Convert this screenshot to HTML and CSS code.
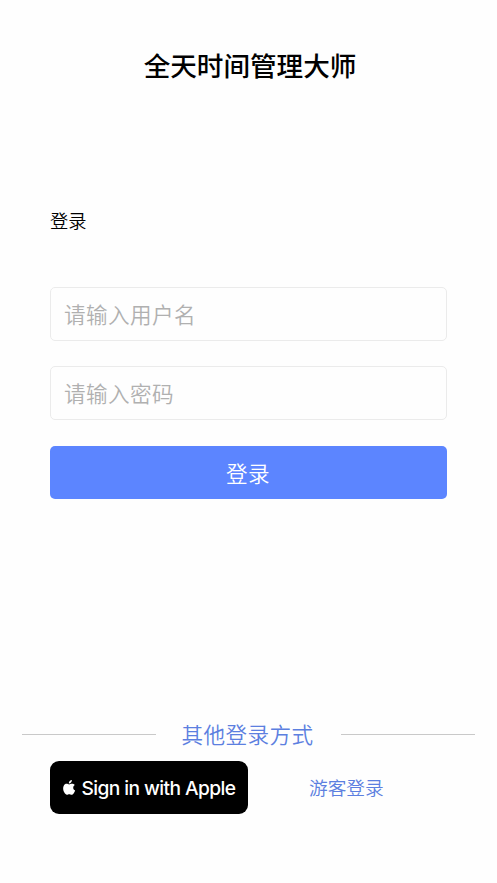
FILE: index.html
```html
<!DOCTYPE html>
<html lang="zh-CN">
<head>
<meta charset="utf-8">
<title>全天时间管理大师</title>
<link rel="stylesheet" href="styles.css">
</head>
<body>
<main class="page">
  <h1 class="title">全天时间管理大师</h1>
  <form class="form">
    <h2 class="heading">登录</h2>
    <input class="field" type="text" placeholder="请输入用户名">
    <input class="field field-password" type="password" placeholder="请输入密码">
    <button class="submit" type="button">登录</button>
  </form>
  <section class="other">
    <div class="divider"><span class="divider-text">其他登录方式</span></div>
    <div class="options">
      <button class="apple" type="button">
        <svg class="apple-icon" viewBox="0 0 24 29" fill="currentColor" aria-hidden="true">
          <path d="M17 0c.2 2-.6 3.800-1.700 5-1.200 1.300-2.600 2-4.100 1.900-.2-1.900.7-3.700 1.800-4.900C14.100.8 15.700.1 17 0z"/>
          <path d="M22.800 9.900c-2.100 1.300-3.100 2.900-3.100 5 0 2.400 1.400 4.400 3.700 5.300-.5 1.700-1.400 3.300-2.400 4.800-1.300 1.900-2.600 3.600-4.600 3.600-1.700 0-2.400-1.100-4.400-1.100s-2.900 1.100-4.500 1.100c-2 0-3.500-2-4.700-3.800C.2 21.100-.8 14.600 1.400 10.900c1.300-2.200 3.200-3.500 5.400-3.500 2 0 3.500 1.200 5 1.200 1.400 0 3-1.400 5.500-1.300 2.200.1 4.100.8 5.500 2.600z"/>
        </svg>
        <span>Sign in with Apple</span>
      </button>
      <a class="guest">游客登录</a>
    </div>
  </section>
</main>
</body>
</html>
```
FILE: styles.css
```css
* {
  box-sizing: border-box;
}

body {
  margin: 0;
  background: #fefefe;
  color: #000;
  font-family: "Noto Sans CJK SC", sans-serif;
  font-weight: 350;
}

.page {
  display: flex;
  flex-direction: column;
  height: 883px;
  padding-top: 45px;
  overflow: hidden;
}

.title {
  margin: 0 0 0 3px;
  font-size: 26.6px;
  font-weight: 500;
  line-height: 40px;
  text-align: center;
}

.form {
  display: flex;
  flex-direction: column;
  margin: 122px 50px 0;
}

.heading {
  margin: 0 0 53px;
  font-size: 18.3px;
  font-weight: 350;
  line-height: 27px;
}

.field {
  width: 100%;
  height: 54px;
  margin: 0 0 25px;
  padding: 0 13px 2px;
  border: 1px solid #ebebeb;
  border-radius: 5px;
  background: #fefefe;
  font: 350 21.6px "Noto Sans CJK SC", sans-serif;
  letter-spacing: 0.4px;
  outline: none;
}

.field-password {
  margin-bottom: 26px;
}

.field::placeholder {
  color: #b0b0b0;
  opacity: 1;
}

.submit {
  height: 53px;
  padding: 0 1px 0 0;
  border: 0;
  border-radius: 5px;
  background: #5c85ff;
  color: #fff;
  font: 350 21.6px "Noto Sans CJK SC", sans-serif;
  letter-spacing: 0.4px;
}

.other {
  margin: 218px 22px 0;
}

.divider {
  display: flex;
  align-items: center;
  gap: 27px;
  height: 34px;
}

.divider::before,
.divider::after {
  content: "";
  flex: 1;
  height: 1px;
  background: #c9c9c9;
}

.divider::before {
  margin-right: -1px;
}

.divider::after {
  margin-left: 1px;
}

.divider-text {
  color: #5c7fe0;
  font-size: 21.6px;
  letter-spacing: 0.4px;
  line-height: 34px;
}

.options {
  display: flex;
  align-items: center;
  margin: 10px 0 0 28px;
}

.apple {
  display: flex;
  align-items: center;
  gap: 6px;
  width: 198px;
  height: 53px;
  padding: 0 0 0 13px;
  border: 0;
  border-radius: 9px;
  background: #000;
  color: #fff;
  font: 500 19.2px Inter, sans-serif;
  letter-spacing: -0.6px;
  white-space: nowrap;
}

.apple-icon {
  width: 12.500px;
  height: 15px;
  margin-top: -1px;
}

.guest {
  margin-left: 61px;
  color: #5c7fe0;
  font-size: 18.7px;
  line-height: 28px;
  padding-bottom: 1px;
}
```
